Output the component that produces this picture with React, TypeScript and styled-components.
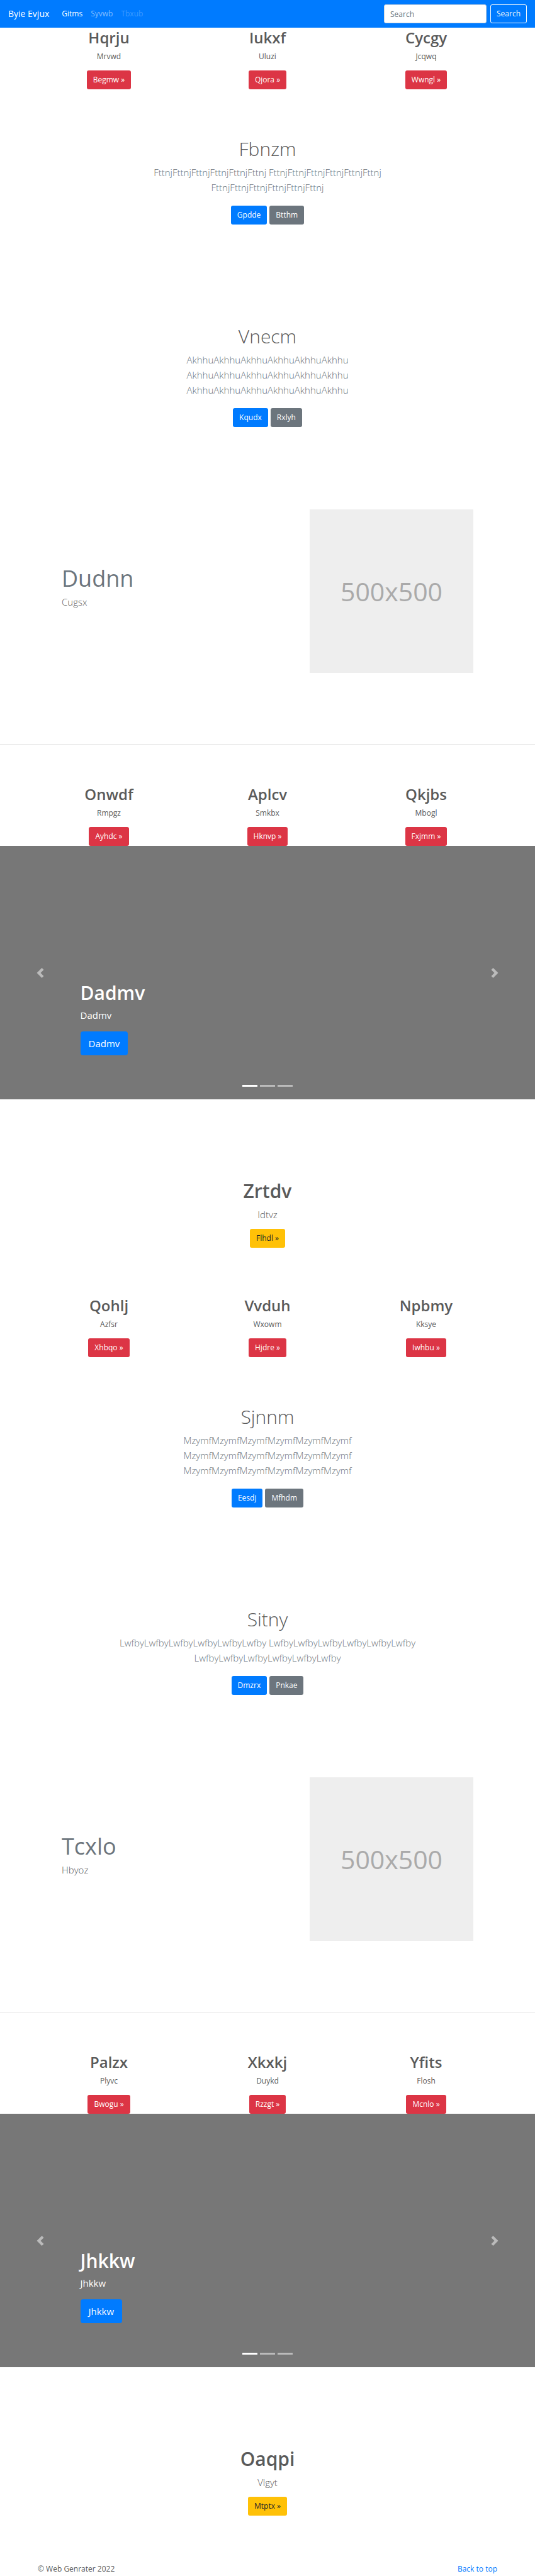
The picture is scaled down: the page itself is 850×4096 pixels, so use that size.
import React from "react";
import styled, { createGlobalStyle } from "styled-components";

const GlobalStyle = createGlobalStyle`
  *, *::before, *::after { box-sizing: border-box; }
  body {
    margin: 0;
    background: #fff;
    color: #5a5a5a;
    font-family: "Open Sans", "Noto Sans", sans-serif;
    font-size: 12px;
    line-height: 18px;
  }
  h1, h2, p { margin: 0; }
  a { text-decoration: none; }
  button, input { font-family: inherit; margin: 0; }
`;

const tones = {
  primary: { bg: "#007bff", fg: "#fff" },
  secondary: { bg: "#6c757d", fg: "#fff" },
  danger: { bg: "#dc3545", fg: "#fff" },
  warning: { bg: "#ffc107", fg: "#212529" },
};
type Tone = keyof typeof tones;

const Button = styled.button<{ $tone: Tone; $large?: boolean }>`
  display: inline-flex;
  align-items: center;
  justify-content: center;
  height: ${(p) => (p.$large ? 38 : 30)}px;
  padding: 0 ${(p) => (p.$large ? 13 : 10)}px;
  border: 0;
  border-radius: ${(p) => (p.$large ? 4 : 3)}px;
  background: ${(p) => tones[p.$tone].bg};
  color: ${(p) => tones[p.$tone].fg};
  font-size: ${(p) => (p.$large ? 15 : 12)}px;
  line-height: 18px;
  cursor: pointer;
`;

const Navbar = styled.nav`
  display: flex;
  align-items: center;
  justify-content: space-between;
  height: 44px;
  padding: 0 13px;
  background: #007bff;
`;

const NavGroup = styled.div`
  display: flex;
  align-items: center;
`;

const Brand = styled.a`
  margin-right: 20px;
  color: #fff;
  font-size: 14px;
  line-height: 24px;
`;

const NavLinks = styled.div`
  display: flex;
  gap: 13px;
`;

const NavLink = styled.a<{ $opacity: number }>`
  color: rgba(255, 255, 255, ${(p) => p.$opacity});
`;

const SearchForm = styled.form`
  display: flex;
  gap: 6px;
`;

const SearchInput = styled.input`
  width: 163px;
  height: 30px;
  padding: 0 9px;
  border: 1px solid #ced4da;
  border-radius: 3px;
  background: #fff;
  color: #495057;
  font-size: 12px;
  &::placeholder { color: #6c757d; opacity: 1; }
`;

const SearchButton = styled.button`
  height: 30px;
  padding: 0 9px;
  border: 1px solid #f8f9fa;
  border-radius: 3px;
  background: transparent;
  color: #f8f9fa;
  font-size: 12px;
  line-height: 18px;
`;

const Columns = styled.section`
  display: grid;
  grid-template-columns: repeat(3, 1fr);
  padding: 1px 47px 0;
`;

const Column = styled.div`
  display: flex;
  flex-direction: column;
  align-items: center;
`;

const ColumnTitle = styled.h2`
  margin-bottom: 6px;
  font-size: 24px;
  font-weight: 600;
  line-height: 30px;
`;

const ColumnText = styled.p`
  margin-bottom: 13px;
`;

const Hero = styled.section`
  display: flex;
  flex-direction: column;
  align-items: center;
  padding: 76px 20px 83px;
  text-align: center;
`;

const Title = styled.h1<{ $light?: boolean }>`
  margin-bottom: 6px;
  font-size: 30px;
  font-weight: ${(p) => (p.$light ? 300 : 600)};
  line-height: 38px;
`;

const Lead = styled.p<{ $muted?: boolean }>`
  color: ${(p) => (p.$muted ? "#6c757d" : "inherit")};
  font-size: 15px;
  font-weight: 300;
  line-height: 24px;
`;

const HeroLead = styled(Lead)`
  max-width: 480px;
  margin-bottom: 17px;
`;

const ButtonPair = styled.div`
  display: flex;
  gap: 4px;
`;

const Feature = styled.section`
  display: flex;
  align-items: center;
  justify-content: space-between;
  padding: 48px 98px 113px;
`;

const FeatureText = styled.div`
  padding-bottom: 16px;
`;

const FeatureTitle = styled.h2`
  color: #6c757d;
  font-size: 36px;
  font-weight: 400;
  line-height: 50px;
`;

const Placeholder = styled.div`
  display: flex;
  align-items: center;
  justify-content: center;
  width: 40%;
  max-width: 260px;
  aspect-ratio: 1;
  background: #eee;
  color: #aaa;
  font-size: 41px;
  line-height: 50px;
`;

const Divider = styled.hr`
  margin: 0 0 63px;
  border: 0;
  border-top: 1px solid rgba(0, 0, 0, 0.1);
`;

const CarouselFrame = styled.section`
  position: relative;
  display: flex;
  flex-direction: column;
  align-items: flex-start;
  justify-content: flex-end;
  height: 403px;
  padding: 0 15% 70px;
  background: #777;
  color: #fff;
`;

const SlideTitle = styled(Title)`
  margin-bottom: 4px;
`;

const SlideText = styled.p`
  margin-bottom: 14px;
  font-size: 15px;
  line-height: 24px;
`;

const Arrow = styled.button<{ $side: "left" | "right" }>`
  position: absolute;
  top: 0;
  bottom: 0;
  ${(p) => p.$side}: 0;
  display: flex;
  align-items: center;
  justify-content: center;
  width: 15%;
  padding: 0;
  border: 0;
  background: none;
  opacity: 0.5;
`;

const Indicators = styled.div`
  position: absolute;
  right: 0;
  bottom: 20px;
  left: 0;
  display: flex;
  justify-content: center;
  gap: 4px;
`;

const Indicator = styled.button<{ $active: boolean }>`
  width: 24px;
  height: 3px;
  padding: 0;
  border: 0;
  background: #fff;
  opacity: ${(p) => (p.$active ? 1 : 0.5)};
`;

const Promo = styled.section`
  display: flex;
  flex-direction: column;
  align-items: center;
  padding: 127px 20px 76px;
`;

const PromoLead = styled(Lead)`
  margin-bottom: 11px;
`;

const Footer = styled.footer`
  display: flex;
  justify-content: space-between;
  padding: 0 60px 2px;
`;

const FooterLink = styled.a`
  color: #007bff;
`;

type ColumnItem = [title: string, text: string, action: string];

function ThreeColumns({ items }: { items: ColumnItem[] }) {
  return (
    <Columns>
      {items.map(([title, text, action]) => (
        <Column key={title}>
          <ColumnTitle>{title}</ColumnTitle>
          <ColumnText>{text}</ColumnText>
          <Button $tone="danger">{action} »</Button>
        </Column>
      ))}
    </Columns>
  );
}

function HeroBlock({ title, lines, actions }: { title: string; lines: string[]; actions: [string, string] }) {
  return (
    <Hero>
      <Title $light>{title}</Title>
      <HeroLead $muted>
        {lines.map((line, i) => (
          <React.Fragment key={i}>
            {i > 0 && <br />}
            {line}
          </React.Fragment>
        ))}
      </HeroLead>
      <ButtonPair>
        <Button $tone="primary">{actions[0]}</Button>
        <Button $tone="secondary">{actions[1]}</Button>
      </ButtonPair>
    </Hero>
  );
}

function FeatureBlock({ title, text }: { title: string; text: string }) {
  return (
    <>
      <Feature>
        <FeatureText>
          <FeatureTitle>{title}</FeatureTitle>
          <Lead>{text}</Lead>
        </FeatureText>
        <Placeholder>500x500</Placeholder>
      </Feature>
      <Divider />
    </>
  );
}

function Carousel({ label }: { label: string }) {
  return (
    <CarouselFrame>
      <SlideTitle>{label}</SlideTitle>
      <SlideText>{label}</SlideText>
      <Button $tone="primary" $large>{label}</Button>
      <Arrow $side="left" aria-label="Previous">
        <svg width="16" height="16" viewBox="0 0 8 8" fill="#fff">
          <path d="M5.25 0l-4 4 4 4 1.5-1.5-2.5-2.5 2.5-2.5-1.5-1.5z" />
        </svg>
      </Arrow>
      <Arrow $side="right" aria-label="Next">
        <svg width="16" height="16" viewBox="0 0 8 8" fill="#fff">
          <path d="M2.75 0l-1.5 1.5 2.5 2.5-2.5 2.5 1.5 1.5 4-4-4-4z" />
        </svg>
      </Arrow>
      <Indicators>
        {[0, 1, 2].map((i) => (
          <Indicator key={i} $active={i === 0} aria-label={`Slide ${i + 1}`} />
        ))}
      </Indicators>
    </CarouselFrame>
  );
}

function PromoBlock({ title, text, action }: { title: string; text: string; action: string }) {
  return (
    <Promo>
      <Title>{title}</Title>
      <PromoLead>{text}</PromoLead>
      <Button $tone="warning">{action} »</Button>
    </Promo>
  );
}

const fttnj = "Fttnj".repeat(6);
const akhhu = "Akhhu".repeat(6);
const mzymf = "Mzymf".repeat(6);
const lwfby = "Lwfby".repeat(6);

export default function App() {
  return (
    <>
      <GlobalStyle />
      <Navbar id="top">
        <NavGroup>
          <Brand href="#top">Byie Evjux</Brand>
          <NavLinks>
            <NavLink href="#top" $opacity={1}>Gitms</NavLink>
            <NavLink href="#top" $opacity={0.5}>Syvwb</NavLink>
            <NavLink href="#top" $opacity={0.25}>Tbxub</NavLink>
          </NavLinks>
        </NavGroup>
        <SearchForm>
          <SearchInput type="text" placeholder="Search" aria-label="Search" />
          <SearchButton type="button">Search</SearchButton>
        </SearchForm>
      </Navbar>
      <main>
        <ThreeColumns
          items={[
            ["Hqrju", "Mrvwd", "Begmw"],
            ["Iukxf", "Uluzi", "Qjora"],
            ["Cycgy", "Jcqwq", "Wwngl"],
          ]}
        />
        <HeroBlock title="Fbnzm" lines={[`${fttnj} ${fttnj}`, fttnj]} actions={["Gpdde", "Btthm"]} />
        <HeroBlock title="Vnecm" lines={[akhhu, akhhu, akhhu]} actions={["Kqudx", "Rxlyh"]} />
        <FeatureBlock title="Dudnn" text="Cugsx" />
        <ThreeColumns
          items={[
            ["Onwdf", "Rmpgz", "Ayhdc"],
            ["Aplcv", "Smkbx", "Hknvp"],
            ["Qkjbs", "Mbogl", "Fxjmm"],
          ]}
        />
        <Carousel label="Dadmv" />
        <PromoBlock title="Zrtdv" text="Idtvz" action="Flhdl" />
        <ThreeColumns
          items={[
            ["Qohlj", "Azfsr", "Xhbqo"],
            ["Vvduh", "Wxowm", "Hjdre"],
            ["Npbmy", "Kksye", "Iwhbu"],
          ]}
        />
        <HeroBlock title="Sjnnm" lines={[mzymf, mzymf, mzymf]} actions={["Eesdj", "Mfhdm"]} />
        <HeroBlock title="Sitny" lines={[`${lwfby} ${lwfby}`, lwfby]} actions={["Dmzrx", "Pnkae"]} />
        <FeatureBlock title="Tcxlo" text="Hbyoz" />
        <ThreeColumns
          items={[
            ["Palzx", "Plyvc", "Bwogu"],
            ["Xkxkj", "Duykd", "Rzzgt"],
            ["Yfits", "Flosh", "Mcnlo"],
          ]}
        />
        <Carousel label="Jhkkw" />
        <PromoBlock title="Oaqpi" text="Vlgyt" action="Mtptx" />
      </main>
      <Footer>
        <p>© Web Genrater 2022</p>
        <FooterLink href="#top">Back to top</FooterLink>
      </Footer>
    </>
  );
}
